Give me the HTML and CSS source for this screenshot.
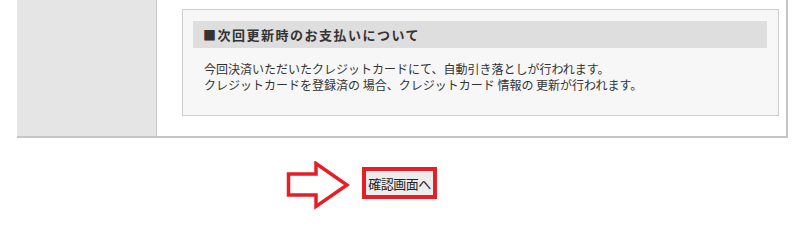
FILE: index.html
```html
<!DOCTYPE html>
<html lang="ja">
<head>
    <meta charset="UTF-8">
    <title>お支払い確認</title>
    <link rel="stylesheet" href="styles.css">
</head>
<body>
    <div class="form-table">
        <div class="label-cell"></div>
        <div class="value-cell">
            <div class="notice">
                <h3 class="notice-title">■次回更新時のお支払いについて</h3>
                <p class="notice-text">今回決済いただいたクレジットカードにて、自動引き落としが行われます。<br>クレジットカードを登録済の 場合、クレジットカード 情報の 更新が行われます。</p>
            </div>
        </div>
    </div>

    <div class="actions">
        <svg class="arrow" width="64" height="50" viewBox="0 0 64 50">
            <polygon points="2.5,13 30,13 30,2.5 61,24 30,45.5 30,34 2.5,34" fill="#fff" stroke="#e61e26" stroke-width="3.5" stroke-linejoin="miter"/>
        </svg>
        <button class="confirm-btn">確認画面へ</button>
    </div>
</body>
</html>
```

FILE: styles.css
```css
body {
    margin: 0;
    background-color: #fff;
    font-family: "Noto Sans CJK JP", "Liberation Sans", sans-serif;
    color: #333;
}
.form-table {
    display: flex;
    width: 769px;
    height: 136px;
    margin-left: 17px;
    border-right: 2px solid #c6c6c6;
    border-bottom: 2px solid #c6c6c6;
}
.label-cell {
    width: 139px;
    background-color: #e5e5e5;
    border-right: 1px solid #c8c8c8;
}
.value-cell {
    flex: 1;
    padding: 9px 7px 0 25px;
}
.notice {
    height: 107px;
    border: 1px solid #cdcdcd;
    background-color: #f7f7f7;
    box-sizing: border-box;
    padding: 11px 11px 0 10px;
}
.notice-title {
    margin: 0;
    height: 27px;
    line-height: 27px;
    padding-left: 10px;
    background-color: #dedede;
    font-size: 13px;
    font-weight: bold;
    letter-spacing: 1.5px;
    color: #333;
}
.notice-text {
    margin: 13px 0 0 11px;
    font-size: 12px;
    line-height: 16px;
    color: #333;
}
.actions {
    display: flex;
    align-items: flex-start;
    padding: 23px 0 22px 286px;
    height: 50px;
}
.arrow {
    display: block;
    margin-right: 12px;
}
.confirm-btn {
    display: block;
    width: 75px;
    height: 32px;
    margin-top: 6px;
    padding: 0;
    border: 4px solid #e61e26;
    background-color: #ececec;
    font-family: "Noto Sans CJK JP", sans-serif;
    font-size: 13px;
    color: #222;
    letter-spacing: -0.5px;
}
```
